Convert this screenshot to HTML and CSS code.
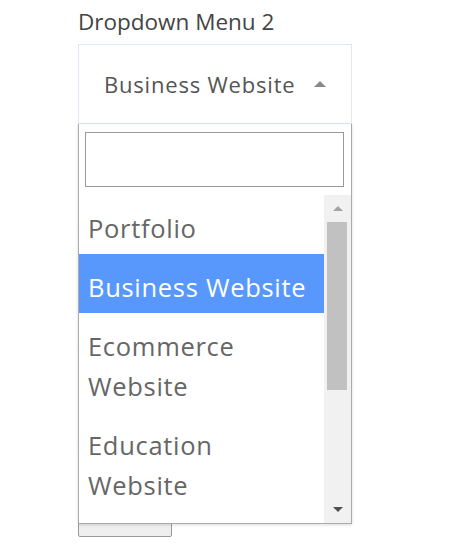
FILE: index.html
```html
<!DOCTYPE html>
<html lang="en">
<head>
  <meta charset="UTF-8" />
  <meta name="viewport" content="width=device-width, initial-scale=1" />
  <title>Dropdown Menu 2</title>
  <link rel="stylesheet" href="styles.css">
</head>
<body>
  <form class="field">
    <label class="field-label" for="site">Dropdown Menu 2</label>
    <div class="select-wrap">
      <div class="select" id="site">
        <span class="select-value">Business Website</span>
        <span class="select-arrow"></span>
      </div>

      <div class="dropdown">
        <div class="search">
          <input type="text" class="search-input" />
        </div>
        <div class="list-wrap">
          <ul class="options">
            <li class="option">Portfolio</li>
            <li class="option selected">Business Website</li>
            <li class="option">Ecommerce Website</li>
            <li class="option">Education Website</li>
          </ul>
          <div class="scrollbar">
            <span class="scroll-btn up"></span>
            <div class="scroll-track">
              <div class="scroll-thumb"></div>
            </div>
            <span class="scroll-btn down"></span>
          </div>
        </div>
      </div>
    </div>
    <button type="submit" class="submit"></button>
  </form>
</body>
</html>
```

FILE: styles.css
```css
body {
  margin: 0;
  font-family: 'Open Sans', 'Liberation Sans', sans-serif;
  background: #fff;
}

.field {
  width: 274px;
  margin: 0 0 0 78px;
  padding-top: 9px;
}

.field-label {
  display: block;
  font-size: 22.5px;
  line-height: 26px;
  color: #444;
  margin-bottom: 9px;
}

.select-wrap {
  position: relative;
}

.select {
  box-sizing: border-box;
  height: 80px;
  border: 1px solid #dfe6f6;
  display: flex;
  align-items: center;
  padding: 0 25px;
  color: #555;
  font-size: 22px;
  letter-spacing: 0.8px;
}

.select-value {
  flex: 1;
}

.select-arrow {
  width: 0;
  height: 0;
  border-left: 6px solid transparent;
  border-right: 6px solid transparent;
  border-bottom: 6px solid #888;
}

.dropdown {
  position: absolute;
  top: 100%;
  left: 0;
  box-sizing: border-box;
  width: 274px;
  height: 400px;
  background: #fff;
  border: 1px solid #aaa;
  border-top: none;
  box-shadow: 0 1px 3px rgba(0,0,0,0.15);
  display: flex;
  flex-direction: column;
}

.search {
  padding: 8px 7px 8px 6px;
}

.search-input {
  box-sizing: border-box;
  width: 100%;
  height: 55px;
  border: 1px solid #999;
  margin: 0;
  font-size: 20px;
}

.list-wrap {
  flex: 1;
  display: flex;
  min-height: 0;
}

.options {
  flex: 1;
  list-style: none;
  margin: 0;
  padding: 0;
  overflow: hidden;
  font-size: 25.5px;
  letter-spacing: 0.7px;
  color: #666;
}

.option {
  padding: 13px 9px 6px;
  line-height: 40px;
}

.option.selected {
  background: #5897fb;
  color: #fff;
}

.scrollbar {
  width: 27px;
  background: #f1f1f1;
  display: flex;
  flex-direction: column;
  align-items: center;
}

.scroll-btn {
  height: 27px;
  width: 100%;
  display: flex;
  align-items: center;
  justify-content: center;
}

.scroll-btn::before {
  content: "";
  border-left: 5px solid transparent;
  border-right: 5px solid transparent;
}

.scroll-btn.up::before {
  border-bottom: 5px solid #a3a3a3;
}

.scroll-btn.down::before {
  border-top: 5px solid #505050;
}

.scroll-track {
  flex: 1;
  width: 100%;
  padding: 0 4px 0 3px;
  box-sizing: border-box;
}

.scroll-thumb {
  height: 168px;
  background: #c1c1c1;
}

.submit {
  display: block;
  width: 94px;
  height: 38px;
  margin-top: 375px;
  border: 1px solid #999;
  border-radius: 2px;
  background: #efefef;
}
```
